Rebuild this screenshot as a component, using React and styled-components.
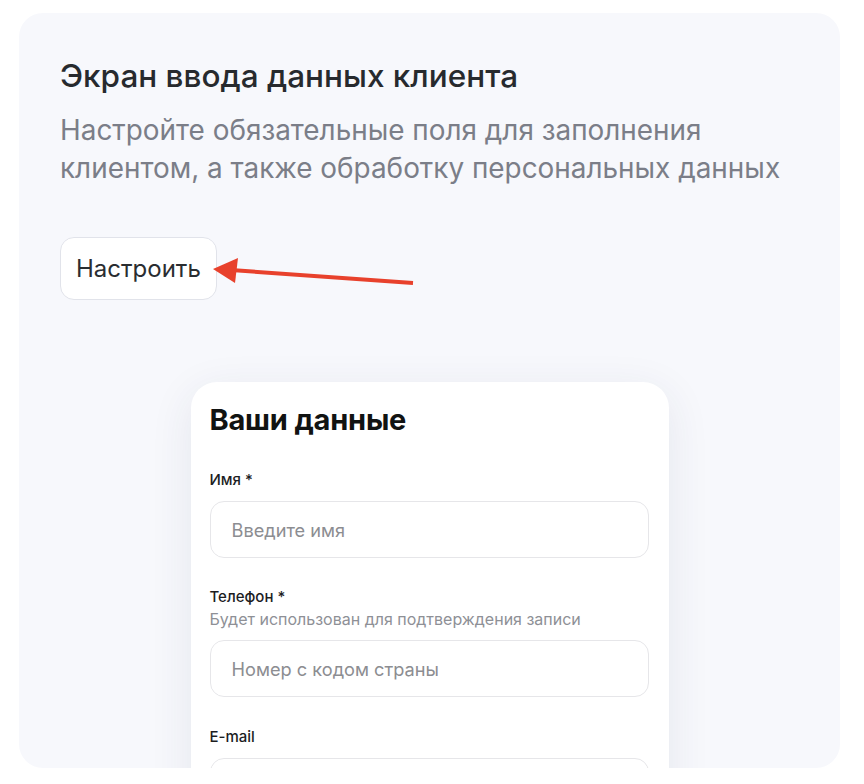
import React from "react";
import styled, { createGlobalStyle } from "styled-components";

const Global = createGlobalStyle`
  html, body { margin: 0; padding: 0; background: #ffffff; }
  body { font-family: Inter, "Noto Sans", sans-serif; -webkit-font-smoothing: antialiased; }
  * { box-sizing: border-box; }
`;

const Page = styled.div`
  padding: 13px 24px 16px 19px;
`;

const Panel = styled.section`
  position: relative;
  width: 821px;
  height: 755px;
  border-radius: 24px;
  background: #f7f8fc;
  overflow: hidden;
  padding: 44px 41px 0 41px;
  display: flex;
  flex-direction: column;
`;

const Title = styled.h2`
  margin: 0;
  font-size: 31.5px;
  line-height: 38px;
  font-weight: 500;
  color: #272a2e;
`;

const Subtitle = styled.p`
  margin: 16px 0 0;
  font-size: 27.9px;
  line-height: 38px;
  font-weight: 400;
  color: #7b7e88;
`;

const ActionRow = styled.div`
  position: relative;
  margin-top: 50px;
  display: flex;
`;

const SetupButton = styled.button`
  height: 63px;
  padding: 0 15px;
  border-radius: 14px;
  border: 1px solid #e1e3ea;
  background: #ffffff;
  font-family: inherit;
  font-size: 24px;
  color: #2a2d31;
  cursor: pointer;
`;

const Arrow = styled.svg`
  position: absolute;
  left: 153px;
  top: 18px;
  overflow: visible;
`;

const Preview = styled.div`
  margin: 82px auto 0;
  width: 478px;
  flex: 1;
  background: #ffffff;
  border-radius: 26px 26px 0 0;
  box-shadow: 0 10px 44px rgba(40, 50, 90, 0.09);
  padding: 20px 20px 0 19px;
  display: flex;
  flex-direction: column;
`;

const FormTitle = styled.h3`
  margin: 0;
  font-size: 29px;
  line-height: 36px;
  font-weight: 700;
  color: #111312;
  letter-spacing: -0.2px;
`;

const Field = styled.div`
  display: flex;
  flex-direction: column;
  margin-top: ${(p) => p.$top}px;
`;

const Label = styled.label`
  font-size: 15px;
  line-height: 20px;
  font-weight: 500;
  color: #1c1d1f;
`;

const Hint = styled.span`
  margin-top: 2px;
  font-size: 16px;
  line-height: 21px;
  color: #8e9096;
`;

const Input = styled.div`
  margin-top: ${(p) => p.$gap}px;
  height: 57px;
  flex-shrink: 0;
  border: 1px solid #e6e6e9;
  border-radius: 14px;
  padding: 0 21px;
  display: flex;
  align-items: center;
  font-size: 18.2px;
  color: #8c8d91;
`;

export default function App() {
  return (
    <>
      <Global />
      <Page>
        <Panel>
          <Title>Экран ввода данных клиента</Title>
          <Subtitle>
            Настройте обязательные поля для заполнения клиентом, а также обработку персональных данных
          </Subtitle>
          <ActionRow>
            <SetupButton>Настроить</SetupButton>
            <Arrow width="200" height="30" viewBox="0 0 200 30">
              <line x1="18" y1="15" x2="200" y2="28" stroke="#e8412c" strokeWidth="4" />
              <polygon points="0,14 25,3 22,28" fill="#e8412c" />
            </Arrow>
          </ActionRow>
          <Preview>
            <FormTitle>Ваши данные</FormTitle>
            <Field $top={32}>
              <Label>Имя *</Label>
              <Input $gap={11}>Введите имя</Input>
            </Field>
            <Field $top={29}>
              <Label>Телефон *</Label>
              <Hint>Будет использован для подтверждения записи</Hint>
              <Input $gap={10}>Номер с кодом страны</Input>
            </Field>
            <Field $top={30}>
              <Label>E-mail</Label>
              <Input $gap={11}></Input>
            </Field>
          </Preview>
        </Panel>
      </Page>
    </>
  );
}
